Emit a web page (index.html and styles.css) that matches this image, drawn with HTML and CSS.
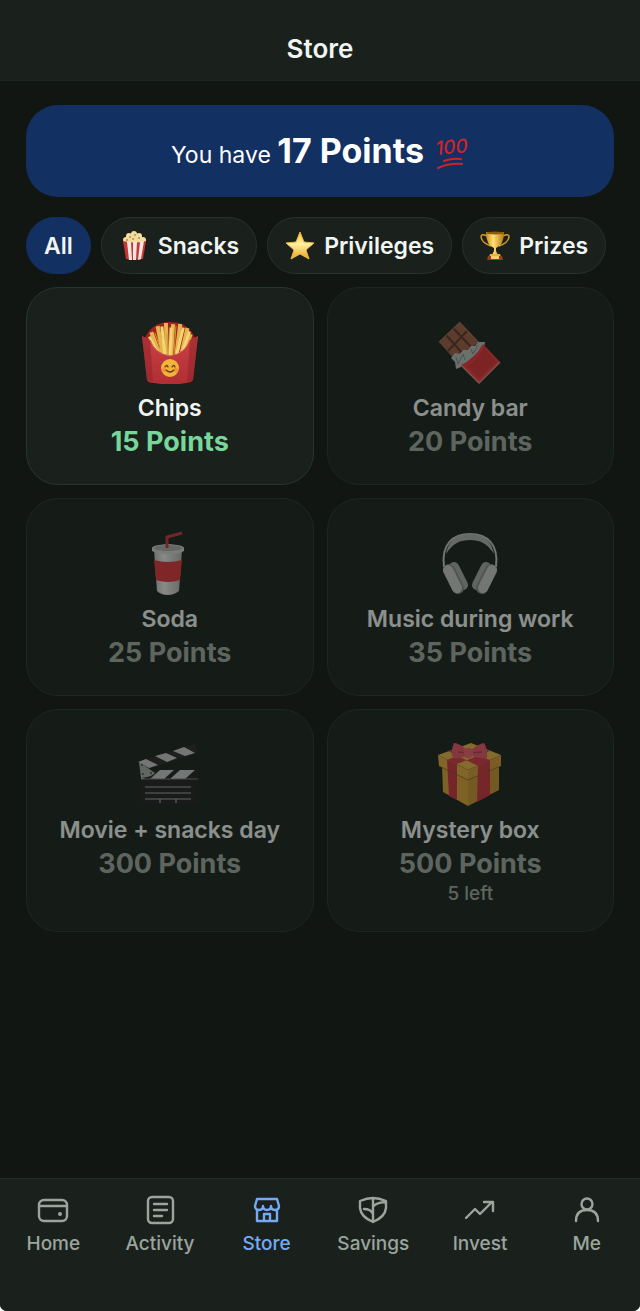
FILE: index.html
```html
<!doctype html>
<html lang="en">
  <head>
    <meta charset="utf-8">
    <meta name="viewport" content="width=device-width, initial-scale=1">
    <title>Store</title>
    <link rel="stylesheet" href="styles.css">
  </head>
  <body>
    <div class="app">
      <header class="header">
        <h1>Store</h1>
      </header>

      <main class="content">
        <div class="balance">
          <p>You have <strong>17 Points</strong></p>
          <svg class="hundred" viewBox="0 0 34 36" aria-hidden="true">
            <text x="1" y="20" transform="rotate(-5 1 20)">100</text>
            <path d="M9 26Q17 23 26 24M3 33Q14 28 27 29" fill="none" stroke="#cf2329" stroke-width="2" stroke-linecap="round"/>
          </svg>
        </div>

        <div class="filters">
          <button class="filter active">All</button>
          <button class="filter">
            <svg viewBox="0 0 30 30" aria-hidden="true">
              <g fill="#f2dca0">
                <circle cx="7" cy="9" r="3"/><circle cx="10" cy="5" r="3"/><circle cx="15" cy="3" r="3"/><circle cx="20" cy="5" r="3"/><circle cx="24" cy="9" r="3"/><path d="M7 5H23V12H7z"/>
              </g>
              <g fill="#b98a3c">
                <circle cx="11" cy="6" r="1"/><circle cx="16" cy="4" r="1"/><circle cx="20" cy="7" r="1"/><circle cx="14" cy="8" r="1"/><circle cx="8" cy="9" r="1"/>
              </g>
              <path d="M4 10Q15 13 27 10L24 28Q15 30 7 28z" fill="#c93436"/>
              <path d="M8 11L10 29H13L12 11zM14 11V29H17L18 11zM21 11L19 29L22 28L25 10z" fill="#f4e7e2"/>
            </svg>
            Snacks
          </button>
          <button class="filter">
            <svg viewBox="0 0 30 30" aria-hidden="true">
              <defs>
                <linearGradient id="star" x1="0" y1="0" x2="0" y2="1"><stop offset="0" stop-color="#f9c832"/><stop offset=".45" stop-color="#fff0a0"/><stop offset="1" stop-color="#eda323"/></linearGradient>
              </defs>
              <path d="M15 1L19 11L29 12L21 19L24 28L15 23L6 28L9 19L1 12L11 11z" fill="url(#star)" stroke="#eab33c" stroke-width="1" stroke-linejoin="round"/>
            </svg>
            Privileges
          </button>
          <button class="filter">
            <svg viewBox="0 0 30 30" aria-hidden="true">
              <defs>
                <linearGradient id="gold"><stop offset="0" stop-color="#d18b17"/><stop offset=".4" stop-color="#ffe179"/><stop offset="1" stop-color="#b87610"/></linearGradient>
              </defs>
              <path d="M7 5Q1 2 1 6Q2 12 11 15M23 5Q29 2 29 6Q28 12 19 15" fill="none" stroke="#d79a28" stroke-width="1.5"/>
              <path d="M6 1Q15 3 24 1Q24 14 16 17V20L18 24H12L14 20V17Q6 14 6 1z" fill="url(#gold)"/>
              <ellipse cx="15" cy="2" rx="9" ry="1.5" fill="#8d5a13"/>
              <path d="M10 23H20L21 26H9z" fill="#e9b33c"/>
              <path d="M8 25H22L23 29H7z" fill="#a33719"/>
              <path d="M11 25H19V28H11z" fill="#f5cf6a"/>
            </svg>
            Prizes
          </button>
        </div>

        <div class="grid">
          <button class="card">
            <svg viewBox="0 0 64 64" aria-hidden="true">
              <defs>
                <linearGradient id="carton" x1="0" y1="0" x2="0" y2="1"><stop offset="0" stop-color="#ca4145"/><stop offset="1" stop-color="#b02e33"/></linearGradient>
              </defs>
              <path d="M7 18Q14 2 32 2Q50 2 57 18V40H7z" fill="#a31f23"/>
              <g stroke-width="4" stroke-linecap="square">
                <path d="M14 14L22 36M20 8L25 36M28 5L29 38M35 6L33 38M42 6L38 38M49 10L43 36M52 16L46 34" stroke="#e5b54c"/>
                <path d="M12 18L20 34M24 8L27 36M33 9L32 38M45 9L39 34M51 13L45 30" stroke="#f5d474" stroke-width="3"/>
                <path d="M17 13L22 28M38 6L36 34M29 14L30 36" stroke="#cf9735" stroke-width="1"/>
              </g>
              <path d="M4 16L12 20Q17 34 32 36Q47 34 52 20L60 16L55 60Q53 63 48 63Q32 66 16 63Q10 63 9 60z" fill="url(#carton)"/>
              <path d="M4 16L12 20L15 62L9 60zM60 16L52 20L49 63L55 60z" fill="#8f242a" opacity=".55"/>
              <path d="M12 20Q17 34 32 36Q47 34 52 20" fill="none" stroke="#d25653" stroke-width="1"/>
              <circle cx="32" cy="48" r="9" fill="#f1b43a"/>
              <path d="M27 47Q29 44 30 47M34 47Q36 44 37 47M28 50Q32 54 36 50" fill="none" stroke="#6b3d16" stroke-width="1.3" stroke-linecap="round"/>
              <circle cx="26" cy="50" r="2" fill="#e77a38" opacity=".6"/><circle cx="38" cy="50" r="2" fill="#e77a38" opacity=".6"/>
            </svg>
            <span class="name">Chips</span>
            <span class="price">15 Points</span>
          </button>

          <button class="card" disabled>
            <svg viewBox="0 0 64 64" aria-hidden="true">
              <path d="M22 2L41 22L17 40L1 22z" fill="#9a5b43"/>
              <path d="M15 8L34 28M8 15L26 35M30 10L10 31" stroke="#5d3225" stroke-width="2"/>
              <path d="M22 2L1 22M23 4L40 22" stroke="#ab7159" stroke-width="1"/>
              <path d="M13 38L17 33L22 34L25 30L30 30L33 26L37 26L40 22L47 22L46 28L23 47L18 49L17 42z" fill="#b3bab4"/>
              <path d="M18 37L20 44L25 34L27 40M33 29L35 34L40 25" fill="none" stroke="#7d8781" stroke-width="1"/>
              <path d="M45 24L62 42L41 63L23 45Q36 40 45 24z" fill="#e8363b"/>
              <path d="M62 42L41 63L23 45" fill="none" stroke="#e18176" stroke-width="1.5"/>
              <path d="M46 28L58 42L41 58L29 46Q40 40 46 28z" fill="#c5262d" opacity=".5"/>
            </svg>
            <span class="name">Candy bar</span>
            <span class="price">20 Points</span>
          </button>

          <button class="card" disabled>
            <svg viewBox="0 0 64 64" aria-hidden="true">
              <defs>
                <linearGradient id="cup"><stop offset="0" stop-color="#b8bab9"/><stop offset=".35" stop-color="#e8e9e8"/><stop offset="1" stop-color="#adafae"/></linearGradient>
              </defs>
              <path d="M16 19H44L41 60Q36 64 30 64Q23 64 19 60z" fill="url(#cup)"/>
              <path d="M16 29Q30 33 44 29L42 49Q30 53 18 49z" fill="#dc333a"/>
              <path d="M14 17Q14 14 30 13Q46 14 46 17V20Q42 23 30 23Q18 23 14 20z" fill="#cfd1cf"/>
              <ellipse cx="30" cy="17" rx="14" ry="3" fill="#a8aba9"/>
              <path d="M29 17V6L44 2" fill="none" stroke="#c93238" stroke-width="3" stroke-linejoin="round"/>
            </svg>
            <span class="name">Soda</span>
            <span class="price">25 Points</span>
          </button>

          <button class="card" disabled>
            <svg viewBox="0 0 64 64" aria-hidden="true">
              <path d="M6 36C3 13 15 3 32 3S61 13 58 36" fill="none" stroke="#c2c4c2" stroke-width="2"/>
              <path d="M8 23C11 8 20 3 32 3S53 8 56 23C49 12 42 9 32 9S15 12 8 23z" fill="#adb0ad"/>
              <g id="ear" stroke-linecap="round">
                <path d="M16 36L25 54" stroke="#a4a7a4" stroke-width="10"/>
                <path d="M11 39L20 57" stroke="#848784" stroke-width="12"/>
                <path d="M10 39L19 57" stroke="#c3c6c3" stroke-width="10"/>
              </g>
              <use href="#ear" transform="translate(64 0) scale(-1 1)"/>
            </svg>
            <span class="name">Music during work</span>
            <span class="price">35 Points</span>
          </button>

          <button class="card" disabled>
            <svg viewBox="0 0 64 64" aria-hidden="true">
              <path d="M3 28H60V63H3z" fill="#202021"/>
              <path d="M0 20L57 2L59 11L4 29z" fill="#29292a"/>
              <path d="M0 20L8 17L20 23L11 26zM17 14L28 11L39 16L29 20zM35 9L46 5L57 11L47 14z" fill="#c4c6c5"/>
              <path d="M22 28H36L26 37H12zM42 28H57L47 37H32zM3 35L7 37H3z" fill="#c4c6c5"/>
              <path d="M1 20L17 31Q14 35 3 36z" fill="#a5a8a6"/>
              <g fill="#424544"><circle cx="4" cy="23" r="1"/><circle cx="5" cy="32" r="1"/><circle cx="13" cy="31" r="1"/></g>
              <path d="M3 37H60" stroke="#777" stroke-width="1"/>
              <path d="M7 45H53M7 51H53M7 57H53M22 57V61M38 57V61" stroke="#a3a5a4" stroke-width="1.2"/>
            </svg>
            <span class="name">Movie + snacks day</span>
            <span class="price">300 Points</span>
          </button>

          <button class="card" disabled>
            <svg viewBox="0 0 64 64" aria-hidden="true">
              <path d="M4 22L30 34V64L5 50z" fill="#d7a036"/>
              <path d="M30 34L61 22V48L30 64z" fill="#c89032"/>
              <path d="M0 13L33 1L63 13L30 28z" fill="#e3b044"/>
              <path d="M0 13L30 28V38L1 24z" fill="#dfa73b"/>
              <path d="M63 13L30 28V38L63 24z" fill="#cf9833"/>
              <path d="M9 18L19 22V58L11 54zM40 24L52 18V53L39 60z" fill="#c9343e"/>
              <path d="M9 18L42 5L52 9L19 22zM19 6L10 9L40 24L52 18z" fill="#cc3944"/>
              <path d="M1 24L30 38L63 24" fill="none" stroke="#76511a" stroke-width="1" opacity=".7"/>
              <path d="M31 10Q22 1 16 1Q12 10 15 16Q23 17 31 13Q40 17 49 16Q50 7 46 1Q39 2 31 10z" fill="#e35561"/>
              <path d="M29 11L20 10M34 11L44 10" stroke="#b33b4a" stroke-width="1.5"/>
              <rect x="26" y="6" width="9" height="10" rx="4" fill="#ea616d"/>
            </svg>
            <span class="name">Mystery box</span>
            <span class="price">500 Points</span>
            <span class="stock">5 left</span>
          </button>
        </div>
      </main>

      <nav class="tabs">
        <a href="#home">
          <svg viewBox="0 0 32 32" aria-hidden="true"><rect x="2" y="6" width="28" height="21" rx="5"/><path d="M2 12H30"/><circle class="dot" cx="23" cy="20" r="2"/></svg>
          Home
        </a>
        <a href="#activity">
          <svg viewBox="0 0 32 32" aria-hidden="true"><rect x="4" y="3" width="25" height="26" rx="4"/><path d="M10 10H23M10 16H23M10 22H18"/></svg>
          Activity
        </a>
        <a class="active" href="#store" aria-current="page">
          <svg viewBox="0 0 32 32" aria-hidden="true"><path d="M6 5H26L28 12Q28 16 24 16Q20 16 20 12Q20 16 16 16Q12 16 12 12Q12 16 8 16Q4 16 4 12zM6 16V27H26V16M13 27V20H19V27"/></svg>
          Store
        </a>
        <a href="#savings">
          <svg viewBox="0 0 32 32" aria-hidden="true"><path d="M16 4Q22 4 29 7V14Q28 23 16 28Q4 23 3 14V7Q10 4 16 4zM16 4V28M7 15Q14 15 16 20M16 13Q18 9 28 8"/></svg>
          Savings
        </a>
        <a href="#invest">
          <svg viewBox="0 0 32 32" aria-hidden="true"><path d="M2 24L11 15L16 20L28 8M20 8H29V17"/></svg>
          Invest
        </a>
        <a href="#me">
          <svg viewBox="0 0 32 32" aria-hidden="true"><circle cx="16" cy="10" r="5.5"/><path d="M5 27Q5 16 16 16Q27 16 27 27"/></svg>
          Me
        </a>
      </nav>
    </div>
  </body>
</html>
```

FILE: styles.css
```css
* {
  box-sizing: border-box;
}

body {
  margin: 0;
  background-color: #fff;
  font-family: Inter, "Liberation Sans", sans-serif;
}

h1, p {
  margin: 0;
}

button {
  font-family: inherit;
}

.app {
  min-height: 100vh;
  display: flex;
  flex-direction: column;
  overflow: hidden;
  border-radius: 0 0 7px 7px;
  background-color: #111612;
  color: #f1f5f2;
}

.header {
  padding: 32px 24px 14px;
  border-bottom: 1px solid #1f2722;
  background-color: #1a211d;
  text-align: center;
}

.header h1 {
  font-size: 26px;
  font-weight: 600;
  line-height: 34px;
}

.content {
  flex: 1;
  padding: 24px 26px;
}

/* points banner */
.balance {
  display: flex;
  justify-content: center;
  align-items: center;
  gap: 11px;
  min-height: 92px;
  padding: 4px 24px 0;
  border-radius: 32px;
  background-color: #133062;
  color: #fff;
}

.balance p {
  font-size: 23px;
  line-height: 44px;
}

.balance strong {
  font-size: 34px;
  font-weight: 700;
}

.hundred {
  width: 34px;
  height: 36px;
}

.hundred text {
  font-size: 19px;
  font-style: italic;
  font-weight: 500;
  fill: #cf2329;
}

/* category filters */
.filters {
  display: flex;
  gap: 10px;
  margin: 20px 0 13px;
}

.filter {
  display: flex;
  align-items: center;
  gap: 9px;
  height: 57px;
  padding: 0 17px;
  border: 1px solid #29312d;
  border-radius: 29px;
  background-color: #1a211d;
  color: #f1f5f2;
  font-size: 23px;
  font-weight: 600;
  white-space: nowrap;
}

.filter.active {
  border-color: #133062;
  background-color: #133062;
}

.filter svg {
  flex: none;
  width: 30px;
  height: 30px;
}

/* store items */
.grid {
  display: grid;
  grid-template-columns: 1fr 1fr;
  gap: 13px;
}

.card {
  display: flex;
  flex-direction: column;
  align-items: center;
  padding: 32px 16px 25px;
  border: 1px solid #2a342f;
  border-radius: 32px;
  background-color: #1a211d;
  color: #f1f5f2;
}

.card svg {
  width: 64px;
  height: 64px;
  margin-bottom: 7px;
}

.name {
  font-size: 23px;
  font-weight: 600;
  line-height: 34px;
}

.price {
  color: #78d69b;
  font-size: 27px;
  font-weight: 700;
  line-height: 34px;
}

.stock {
  color: #9da69f;
  font-size: 19px;
  font-weight: 500;
  line-height: 25px;
}

.card:disabled {
  opacity: .55;
}

.card:disabled .price {
  color: #9da69f;
}

/* bottom navigation */
.tabs {
  display: grid;
  grid-template-columns: repeat(6, 1fr);
  padding: 15px 0 55px;
  border-top: 1px solid #242c27;
  background-color: #1a211d;
}

.tabs a {
  display: flex;
  flex-direction: column;
  align-items: center;
  gap: 5px;
  color: #9ba59e;
  font-size: 19px;
  font-weight: 500;
  line-height: 25px;
  text-decoration: none;
}

.tabs a.active {
  color: #75a9f5;
}

.tabs svg {
  width: 32px;
  height: 32px;
  fill: none;
  stroke: currentColor;
  stroke-width: 2.4;
  stroke-linecap: round;
  stroke-linejoin: round;
}

.tabs .dot {
  fill: currentColor;
  stroke: none;
}
```
